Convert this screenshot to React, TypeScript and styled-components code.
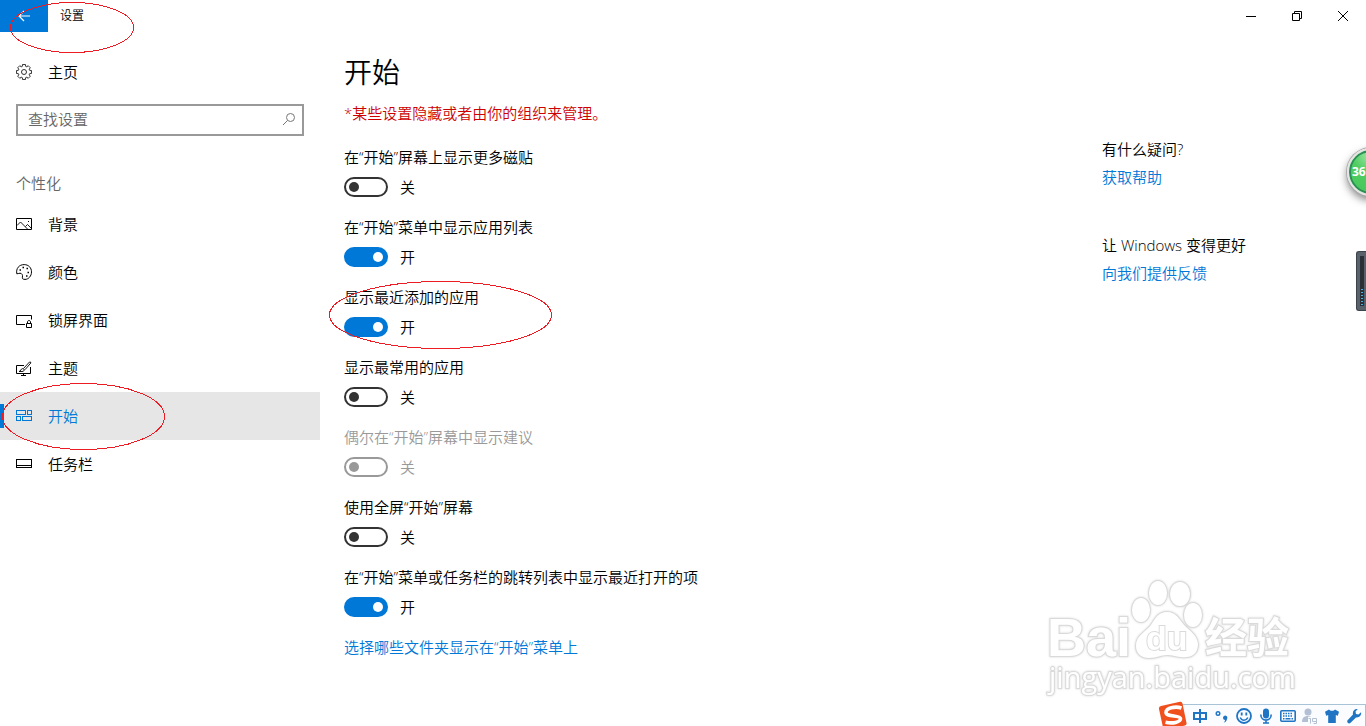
import React from "react";
import styled, { createGlobalStyle } from "styled-components";

const BLUE = "#0078d7";

const GlobalStyle = createGlobalStyle`
  *, *::before, *::after { box-sizing: border-box; }
  body {
    margin: 0;
    background: #fff;
    color: #000;
    font: 350 15px/20px "Open Sans", "Noto Sans CJK SC", sans-serif;
  }
  a { text-decoration: none; }
  h1, h2, p, ul { margin: 0; padding: 0; font-weight: inherit; }
`;

const Window = styled.div`
  position: relative;
  display: flex;
  flex-direction: column;
  min-height: 100vh;
  overflow: hidden;
`;

const TitleBar = styled.header`
  position: relative;
  display: flex;
  height: 32px;
`;

const BackButton = styled.button`
  display: flex;
  align-items: center;
  justify-content: center;
  width: 48px;
  padding: 0;
  border: 0;
  background: ${BLUE};
  color: #fff;
`;

const WindowTitle = styled.span`
  flex: 1;
  padding-left: 12px;
  font-size: 12px;
  line-height: 32px;
`;

const WindowButton = styled.button`
  display: flex;
  align-items: center;
  justify-content: center;
  width: 46px;
  padding: 0;
  border: 0;
  background: transparent;
  color: #000;
`;

const Body = styled.div`
  display: flex;
  flex: 1;
  padding-top: 16px;
`;

const Sidebar = styled.nav`
  flex: none;
  width: 320px;
`;

const NavLink = styled.a<{ $active?: boolean }>`
  position: relative;
  display: flex;
  align-items: center;
  gap: 16px;
  height: 48px;
  padding: 0 16px;
  color: ${(p) => (p.$active ? BLUE : "#000")};
  background: ${(p) => (p.$active ? "#e6e6e6" : "transparent")};

  &::before {
    content: "";
    display: ${(p) => (p.$active ? "block" : "none")};
    position: absolute;
    left: 0;
    top: 12px;
    width: 4px;
    height: 24px;
    background: ${BLUE};
  }
`;

const SearchBox = styled.label`
  display: flex;
  align-items: center;
  height: 32px;
  margin: 8px 16px 32px;
  padding: 0 6px 2px 10px;
  border: 2px solid #999;
  color: #767676;
`;

const SearchInput = styled.input`
  flex: 1;
  min-width: 0;
  padding: 0;
  border: 0;
  outline: 0;
  background: transparent;
  font: inherit;
  &::placeholder { color: #666; opacity: 1; }
`;

const NavHeading = styled.h2`
  padding: 0 0 2px 16px;
  color: #666;
  font-size: 15px;
  line-height: 30px;
`;

const Main = styled.main`
  flex: 1;
  padding-left: 24px;
`;

const PageTitle = styled.h1`
  font-size: 28px;
  line-height: 48px;
`;

const Notice = styled.p`
  margin: 7px 0 24px;
  color: #c00;
`;

const Settings = styled.div`
  display: flex;
  flex-direction: column;
  gap: 20px;
`;

const Setting = styled.label<{ $disabled?: boolean }>`
  position: relative;
  display: flex;
  flex-direction: column;
  align-items: flex-start;
  gap: 10px;
  color: ${(p) => (p.$disabled ? "#999" : "#000")};
`;

const SwitchRow = styled.span`
  display: flex;
  align-items: center;
  gap: 12px;
`;

const Switch = styled.input`
  appearance: none;
  display: flex;
  align-items: center;
  width: 44px;
  height: 20px;
  margin: 0;
  padding: 0 3px;
  border: 2px solid #333;
  border-radius: 10px;

  &::before {
    content: "";
    width: 10px;
    height: 10px;
    border-radius: 50%;
    background: #333;
  }
  &:checked {
    justify-content: flex-end;
    border-color: ${BLUE};
    background: ${BLUE};
  }
  &:checked::before { background: #fff; }
  &:disabled { border-color: #999; }
  &:disabled::before { background: #999; }
`;

const TextLink = styled.a`
  color: ${BLUE};
`;

const Aside = styled.aside`
  display: flex;
  flex-direction: column;
  gap: 48px;
  flex: none;
  width: 264px;
  padding-top: 91px;
`;

const HelpGroup = styled.section`
  display: flex;
  flex-direction: column;
  gap: 8px;
`;

const HelpTitle = styled.h2`
  font-size: 15px;
`;

const Ring = styled.svg<{ $left: number; $top: number }>`
  position: absolute;
  z-index: 2;
  left: ${(p) => p.$left}px;
  top: ${(p) => p.$top}px;
  fill: none;
  stroke: #ed1c24;
  shape-rendering: crispEdges;
  pointer-events: none;
`;

const BallDock = styled.div`
  position: absolute;
  right: 0;
  top: 140px;
  width: 32px;
  height: 68px;
  padding: 8px 0 0 13px;
  overflow: hidden;
`;

const Ball = styled.div`
  width: 48px;
  height: 48px;
  padding-left: 3px;
  border: 2px solid #e4e4e4;
  border-radius: 50%;
  background: radial-gradient(circle at 50% 10%, #a5e8ac 0, #50cd62 40%, #45c65a 100%);
  box-shadow: 0 0 0 1px #aaa, inset 0 0 0 2px #2b8f55, 0 4px 8px rgba(0, 0, 0, 0.5);
  color: #fff;
  font: 700 12px/43px "Open Sans", sans-serif;
`;

const Meter = styled.div`
  position: absolute;
  right: 0;
  top: 251px;
  width: 10px;
  height: 60px;
  padding: 4px 3px;
  border: 1px solid #3c434b;
  border-right: 0;
  border-radius: 3px 0 0 3px;
  background: #59616b;
`;

const MeterScale = styled.div`
  display: flex;
  align-items: flex-end;
  width: 4px;
  height: 50px;
  padding: 0 1px;
  background: #2b3038;

  &::before {
    content: "";
    width: 2px;
    height: 17px;
    background: repeating-linear-gradient(#41b4e6 0 1px, #2b3038 1px 3px);
  }
`;

const Watermark = styled.svg`
  position: absolute;
  right: 71px;
  bottom: 29px;
  overflow: visible;
  fill: #fff;
  stroke: #dadada;
  stroke-width: 2;
  paint-order: stroke;
  filter: drop-shadow(0 0 1px #d6d6d6);
`;

const ImeBar = styled.div`
  position: absolute;
  right: 0;
  bottom: 0;
  display: flex;
  align-items: center;
  height: 22px;
  padding-left: 20px;
  border-top: 1px solid #a9c3d6;
  border-right: 1px solid #a9c3d6;
  background: #fafcff;
`;

const ImeLogo = styled.svg`
  position: absolute;
  left: -11px;
  top: -4px;
`;

const ImeButton = styled.button`
  display: flex;
  align-items: center;
  justify-content: center;
  width: 22px;
  height: 22px;
  padding: 0;
  border: 0;
  background: transparent;
  color: #1f74c4;
`;

const Icon = ({ children, crisp }: { children: React.ReactNode; crisp?: boolean }) => (
  <svg
    width="16"
    height="16"
    viewBox="0 0 16 16"
    fill="none"
    stroke="currentColor"
    shapeRendering={crisp ? "crispEdges" : "auto"}
    aria-hidden="true"
  >
    {children}
  </svg>
);

const gearPath = (() => {
  const points: string[] = [];
  for (let i = 0; i < 8; i++) {
    const centre = (i * Math.PI) / 4;
    [[-0.28, 5.9], [-0.2, 7.6], [0.2, 7.6], [0.28, 5.9]].forEach(([a, r]) => {
      points.push(`${(8 + r * Math.sin(centre + a)).toFixed(2)} ${(8 - r * Math.cos(centre + a)).toFixed(2)}`);
    });
  }
  return `M${points.join("L")}Z`;
})();

const icons = {
  gear: (
    <Icon>
      <path d={gearPath} strokeWidth="0.8" strokeLinejoin="round" />
      <circle cx="8" cy="8" r="2.5" strokeWidth="0.8" />
    </Icon>
  ),
  picture: (
    <Icon>
      <path d="M.5 2.5h15v11H.5z" />
      <path d="M1 9.5l3.5-3.5 7.5 7.5M9.5 10.5l2-2 4 4" strokeWidth="0.9" />
      <path d="M12 5.5h1" />
    </Icon>
  ),
  palette: (
    <Icon>
      <path d="M.8 9.8C-.2 4.500 3 .6 8.200 .6c4.300 0 7.300 3.100 7.300 7.300s-3 7.500-6.500 7.500c-2.200 0-3-.8-2.600-2.200.6-2-.5-4-2.400-4-1.500 0-2 .8-3.200.6z" />
      <path d="M6.500 3.500h1.500M10.500 4.500H12M3.500 6H5M11.500 8.500H13M10 12h1.500" strokeWidth="1.500" />
    </Icon>
  ),
  lock: (
    <Icon>
      <path d="M9 12.500H.5v-9h15v4" />
      <path d="M10.500 11.500h5v4h-5zM11.500 11.500V10c0-2 3-2 3 0v1.500" />
    </Icon>
  ),
  theme: (
    <Icon>
      <path d="M8 5.500H.5v8h14V7M7.500 13.500v2M5 15.500h5" />
      <path d="M14.800 3L9 9.700M13.500 2L7.500 8.500M13.500 2q1.500-.5 1.300 1M3 11.500c2 0 1.500-2.900 3.700-2.900 2 0 2.300 2.900-.7 2.900z" strokeWidth="0.9" />
    </Icon>
  ),
  start: (
    <Icon crisp>
      <path d="M.5 2.500h9v4h-9zM11.500 2.500h4v4h-4zM.5 8.500h4v4h-4zM6.500 8.500h9v4h-9z" />
    </Icon>
  ),
  taskbar: (
    <Icon crisp>
      <path d="M.5 3.500h15v8H.5zM.5 9.500h15" />
    </Icon>
  ),
};

const navItems = [
  { label: "背景", icon: icons.picture },
  { label: "颜色", icon: icons.palette },
  { label: "锁屏界面", icon: icons.lock },
  { label: "主题", icon: icons.theme },
  { label: "开始", icon: icons.start, active: true },
  { label: "任务栏", icon: icons.taskbar },
];

const settings = [
  { label: "在“开始”屏幕上显示更多磁贴", on: false },
  { label: "在“开始”菜单中显示应用列表", on: true },
  { label: "显示最近添加的应用", on: true, ringed: true },
  { label: "显示最常用的应用", on: false },
  { label: "偶尔在“开始”屏幕中显示建议", on: false, disabled: true },
  { label: "使用全屏“开始”屏幕", on: false },
  { label: "在“开始”菜单或任务栏的跳转列表中显示最近打开的项", on: true },
];

const Ellipse = ({ w, h, left, top }: { w: number; h: number; left: number; top: number }) => (
  <Ring $left={left} $top={top} width={w} height={h} aria-hidden="true">
    <ellipse cx={w / 2} cy={h / 2} rx={(w - 1) / 2} ry={(h - 1) / 2} />
  </Ring>
);

const SettingSwitch = ({ item }: { item: (typeof settings)[number] }) => {
  const [on, setOn] = React.useState(item.on);
  return (
    <Setting $disabled={item.disabled}>
      <span>{item.label}</span>
      <SwitchRow>
        <Switch type="checkbox" checked={on} disabled={item.disabled} onChange={() => setOn(!on)} />
        <span>{on ? "开" : "关"}</span>
      </SwitchRow>
      {item.ringed && <Ellipse w={223} h={68} left={-15} top={-6} />}
    </Setting>
  );
};

const BaiduMark = () => (
  <Watermark width="250" height="120" viewBox="0 0 250 120" aria-hidden="true">
    <text x="2" y="79" fontFamily="Liberation Sans" fontWeight="700" fontSize="54">Bai</text>
    <ellipse cx="113" cy="16" rx="9" ry="12" />
    <ellipse cx="135" cy="17" rx="10" ry="12" />
    <ellipse cx="96" cy="33" rx="9" ry="12" />
    <ellipse cx="148" cy="38" rx="9" ry="12" />
    <path d="M122 35C113 35 110 42 106 48C100 56 91 58 91 69C91 77 97 81 104 81C112 81 115 78 122 78C129 78 133 81 141 80C149 80 153 74 153 67C152 58 145 54 139 48C134 42 131 35 122 35Z" />
    <text x="101" y="73" fontFamily="Liberation Sans" fontWeight="700" fontSize="34">du</text>
    <text x="160" y="76" fontFamily="Noto Sans CJK SC" fontWeight="700" fontSize="42">经验</text>
    <text x="4" y="111" fontFamily="Open Sans" fontWeight="400" fontSize="29">jingyan.baidu.com</text>
  </Watermark>
);

const Ime = () => (
  <ImeBar>
    <ImeLogo width="30" height="28" viewBox="0 0 30 28" aria-hidden="true">
      <path d="M3 5L22 .8Q24 .4 24.500 2.500L28.500 22Q29 24 27 24.500L8 28.500Q5.500 29 5 26.500L1 8Q.6 5.500 3 5z" fill="#f0501e" />
      <path d="M23.500 7C17 5 8 7 8 11.500c0 4.500 14 2.500 14.500 6 .3 3.800-8 5.300-15 3.800" fill="none" stroke="#fff" strokeWidth="3.600" />
    </ImeLogo>
    <ImeButton aria-label="中文">
      <svg width="16" height="16" fill="none" stroke="currentColor" strokeWidth="2">
        <path d="M2 5h12v6H2zM8 1v14" />
      </svg>
    </ImeButton>
    <ImeButton aria-label="标点">
      <svg width="16" height="16" fill="none" stroke="currentColor">
        <circle cx="4" cy="5.500" r="1.800" strokeWidth="1.400" />
        <path d="M9 9.500a2.200 2.200 0 1 1 4 1.500c-.2 2-1.700 3.200-3.400 3.600 1-1 1.500-1.600 1.400-2.600A2.200 2.200 0 0 1 9 9.500z" fill="currentColor" stroke="none" />
      </svg>
    </ImeButton>
    <ImeButton aria-label="表情">
      <svg width="16" height="16" fill="none" stroke="currentColor">
        <circle cx="8" cy="8" r="7" strokeWidth="1.800" />
        <path d="M5.700 4.500v3M10.300 4.500v3" strokeWidth="1.800" />
        <path d="M4.200 9.500c1.500 3.500 6 3.500 7.600 0" strokeWidth="1.500" />
      </svg>
    </ImeButton>
    <ImeButton aria-label="语音">
      <svg width="16" height="16" fill="none" stroke="currentColor">
        <rect x="5" y="0.500" width="6" height="10" rx="3" fill="currentColor" stroke="none" />
        <path d="M2.800 6.500C2.800 14 13.200 14 13.200 6.500M8 12v3M5 15h6" strokeWidth="1.600" />
      </svg>
    </ImeButton>
    <ImeButton aria-label="键盘">
      <svg width="16" height="16" fill="none" stroke="currentColor">
        <rect x="0.800" y="2.800" width="14.400" height="10.400" rx="1" strokeWidth="1.600" />
        <path d="M3 5.500h10M3 8h10" strokeWidth="1.500" strokeDasharray="1.500 1" />
        <path d="M3 10.800h1.500M5.500 10.800h5M11.500 10.800H13" strokeWidth="1.500" />
      </svg>
    </ImeButton>
    <ImeButton aria-label="账户">
      <svg width="16" height="16" fill="#b3bfd3">
        <circle cx="6" cy="4" r="3.500" />
        <path d="M0 14c0-4 2-6 6-6 1.500 0 2.500.3 3.300.8H6V14z" />
        <path d="M6.500 10.500h2V15.500M10.500 10.500v3h4M10.500 10.500h4v5h-3" fill="none" stroke="#b3bfd3" />
      </svg>
    </ImeButton>
    <ImeButton aria-label="皮肤">
      <svg width="16" height="16" fill="currentColor">
        <path d="M5 1.500c1 1.800 5 1.800 6 0l4 2.200-1.200 4-2-.7v8H4.200V7l-2 .7L1 3.700z" />
      </svg>
    </ImeButton>
    <ImeButton aria-label="工具">
      <svg width="16" height="16" fill="currentColor">
        <path d="M11.800 1L9.500 3.500l.5 2.500 2.500.5L15 4.200c.8 3-1.600 5.800-5 5.200L4.300 15c-1.800 1.300-4-1-2.700-2.700L7 6.500C6.200 3 8.800.3 11.800 1z" />
      </svg>
    </ImeButton>
  </ImeBar>
);

export default function App() {
  return (
    <Window>
      <GlobalStyle />
      <TitleBar>
        <BackButton aria-label="返回">
          <svg width="12" height="12" fill="none" stroke="currentColor" strokeWidth="1.200">
            <path d="M12 6H1M6 1L1 6l5 5" />
          </svg>
        </BackButton>
        <WindowTitle>设置</WindowTitle>
        <WindowButton aria-label="最小化">
          <svg width="10" height="10" stroke="currentColor"><path d="M0 5.500h10" /></svg>
        </WindowButton>
        <WindowButton aria-label="还原">
          <svg width="10" height="10" fill="none" stroke="currentColor">
            <path d="M.5 2.500h7v7h-7zM2.500 2.500v-2h7v7h-2" />
          </svg>
        </WindowButton>
        <WindowButton aria-label="关闭">
          <svg width="10" height="10" stroke="currentColor"><path d="M0 0l10 10M10 0L0 10" /></svg>
        </WindowButton>
        <Ellipse w={124} h={51} left={10} top={2} />
      </TitleBar>

      <Body>
        <Sidebar>
          <NavLink href="#home">{icons.gear}主页</NavLink>
          <SearchBox>
            <SearchInput type="text" placeholder="查找设置" aria-label="查找设置" />
            <svg width="14" height="14" fill="none" stroke="currentColor" aria-hidden="true">
              <circle cx="8.500" cy="5.500" r="4" />
              <path d="M5.500 8.500L1 13" />
            </svg>
          </SearchBox>
          <NavHeading>个性化</NavHeading>
          {navItems.map((item) => (
            <NavLink key={item.label} href="#" $active={item.active}>
              {item.icon}
              {item.label}
              {item.active && <Ellipse w={163} h={67} left={2} top={-9} />}
            </NavLink>
          ))}
        </Sidebar>

        <Main>
          <PageTitle>开始</PageTitle>
          <Notice>*某些设置隐藏或者由你的组织来管理。</Notice>
          <Settings>
            {settings.map((item) => (
              <SettingSwitch key={item.label} item={item} />
            ))}
            <TextLink href="#folders">选择哪些文件夹显示在“开始”菜单上</TextLink>
          </Settings>
        </Main>

        <Aside>
          <HelpGroup>
            <HelpTitle>有什么疑问?</HelpTitle>
            <TextLink href="#help">获取帮助</TextLink>
          </HelpGroup>
          <HelpGroup>
            <HelpTitle>让 Windows 变得更好</HelpTitle>
            <TextLink href="#feedback">向我们提供反馈</TextLink>
          </HelpGroup>
        </Aside>
      </Body>

      <BallDock><Ball>36</Ball></BallDock>
      <Meter><MeterScale /></Meter>
      <BaiduMark />
      <Ime />
    </Window>
  );
}
